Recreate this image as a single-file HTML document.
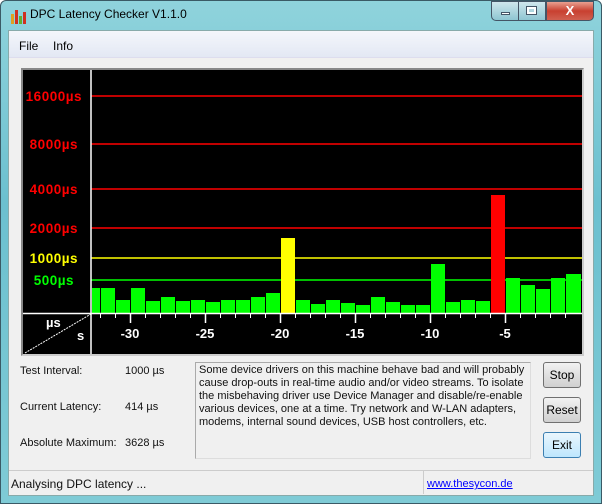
<!DOCTYPE html>
<html><head><meta charset="utf-8"><style>
*{margin:0;padding:0;box-sizing:border-box}
body{width:602px;height:504px;overflow:hidden;background:#fff;font-family:"Liberation Sans",sans-serif;position:relative}
.frame{position:absolute;left:0;top:0;width:602px;height:504px;background:linear-gradient(180deg,#8fd3dc 0%,#6cc0cf 40%,#7fcbd6 100%);border:1px solid #3a5a66;border-radius:6px 6px 0 0}
.title{position:absolute;left:30px;top:7px;font-size:12px;color:#000}
.client{position:absolute;left:8px;top:30px;width:586px;height:466px;background:#f0f0f0;border:1px solid #8aa}
.menu{position:absolute;left:0;top:0;width:584px;height:27px;background:linear-gradient(#f4f6fb,#e3e8f4);border-bottom:1px solid #dde}
.menu span{position:absolute;top:8px;font-size:12px}
.t{position:absolute;font-size:11px;color:#111;white-space:nowrap}
.btn{position:absolute;left:543px;width:38px;height:26px;border:1px solid #707070;border-radius:3px;background:linear-gradient(#f2f2f2,#e0e0e0 50%,#d0d0d0);font-size:12px;text-align:center;line-height:24px}
</style></head><body>
<div class="frame"></div>
<svg style="position:absolute;left:10px;top:8px" width="16" height="16"><rect x="1" y="6" width="3" height="10" fill="#e0a020"/><rect x="5" y="2" width="3" height="14" fill="#d03020"/><rect x="9" y="8" width="3" height="8" fill="#60b030"/><rect x="13" y="4" width="3" height="12" fill="#d03020"/></svg>
<div class="title">DPC Latency Checker V1.1.0</div>
<div style="position:absolute;left:491px;top:1px;width:28px;height:20px;border:1px solid #456;border-radius:0 0 0 5px;background:linear-gradient(#cfe6ec,#8ec6d2)"><div style="position:absolute;left:9px;top:10px;width:9px;height:3px;background:#fff;border:1px solid #456"></div></div>
<div style="position:absolute;left:519px;top:1px;width:27px;height:20px;border:1px solid #456;border-left:0;background:linear-gradient(#cfe6ec,#8ec6d2)"><div style="position:absolute;left:8px;top:5px;width:9px;height:7px;border:2px solid #fff;outline:1px solid #456"></div></div>
<div style="position:absolute;left:546px;top:1px;width:48px;height:20px;border:1px solid #456;border-radius:0 0 5px 0;background:linear-gradient(#e8a090,#c84030 50%,#d06050);color:#fff;font-weight:bold;font-size:13px;text-align:center;line-height:18px">X</div>
<div class="client">
<div class="menu"><span style="left:10px">File</span><span style="left:44px">Info</span></div>
</div>
<div style="position:absolute;left:21px;top:68px;width:563px;height:288px;border:2px solid #888;border-right-color:#ccc;border-bottom-color:#ccc"></div>
<svg style="position:absolute;left:23px;top:70px" width="559" height="284" viewBox="23 70 559 284" font-family="Liberation Sans, sans-serif" font-weight="bold">
<rect x="23" y="70" width="559" height="284" fill="#000"/>
<g stroke-width="1.4">
<line x1="91" x2="582" y1="96" y2="96" stroke="#f00"/>
<line x1="91" x2="582" y1="144" y2="144" stroke="#f00"/>
<line x1="91" x2="582" y1="189" y2="189" stroke="#f00"/>
<line x1="91" x2="582" y1="228" y2="228" stroke="#f00"/>
<line x1="91" x2="582" y1="258" y2="258" stroke="#ff0"/>
<line x1="91" x2="582" y1="280" y2="280" stroke="#0f0"/>
</g>
<g font-size="13.5" text-anchor="end" letter-spacing="0.5">
<text x="82" y="101" fill="#f00">16000µs</text>
<text x="78" y="149" fill="#f00">8000µs</text>
<text x="78" y="194" fill="#f00">4000µs</text>
<text x="78" y="233" fill="#f00">2000µs</text>
<text x="78" y="263" fill="#ff0">1000µs</text>
<text x="74" y="285" fill="#0f0">500µs</text>
</g>
<g fill="#0f0">
<rect x="92" y="288" width="8" height="25"/>
<rect x="101" y="288" width="14" height="25"/>
<rect x="116" y="300" width="14" height="13"/>
<rect x="131" y="288" width="14" height="25"/>
<rect x="146" y="301" width="14" height="12"/>
<rect x="161" y="297" width="14" height="16"/>
<rect x="176" y="301" width="14" height="12"/>
<rect x="191" y="300" width="14" height="13"/>
<rect x="206" y="302" width="14" height="11"/>
<rect x="221" y="300" width="14" height="13"/>
<rect x="236" y="300" width="14" height="13"/>
<rect x="251" y="297" width="14" height="16"/>
<rect x="266" y="293" width="14" height="20"/>
<rect x="281" y="238" width="14" height="75" fill="#ff0"/>
<rect x="296" y="300" width="14" height="13"/>
<rect x="311" y="304" width="14" height="9"/>
<rect x="326" y="300" width="14" height="13"/>
<rect x="341" y="303" width="14" height="10"/>
<rect x="356" y="305" width="14" height="8"/>
<rect x="371" y="297" width="14" height="16"/>
<rect x="386" y="302" width="14" height="11"/>
<rect x="401" y="305" width="14" height="8"/>
<rect x="416" y="305" width="14" height="8"/>
<rect x="431" y="264" width="14" height="49"/>
<rect x="446" y="302" width="14" height="11"/>
<rect x="461" y="300" width="14" height="13"/>
<rect x="476" y="301" width="14" height="12"/>
<rect x="491" y="195" width="14" height="118" fill="#f00"/>
<rect x="506" y="278" width="14" height="35"/>
<rect x="521" y="285" width="14" height="28"/>
<rect x="536" y="289" width="14" height="24"/>
<rect x="551" y="278" width="14" height="35"/>
<rect x="566" y="274" width="15" height="39"/>
</g>
<line x1="91" y1="70" x2="91" y2="354" stroke="#fff" stroke-width="1.5"/>
<line x1="23" y1="313.5" x2="582" y2="313.5" stroke="#fff" stroke-width="1.5"/>
<g stroke="#fff" stroke-width="1">
<path d="M100.5 313v5M115.5 313v5M145.5 313v5M160.5 313v5M175.5 313v5M190.5 313v5M220.5 313v5M235.5 313v5M250.5 313v5M265.5 313v5M295.5 313v5M310.5 313v5M325.5 313v5M340.5 313v5M370.5 313v5M385.5 313v5M400.5 313v5M415.5 313v5M445.5 313v5M460.5 313v5M475.5 313v5M490.5 313v5M520.5 313v5M535.5 313v5M550.5 313v5M565.5 313v5"/>
<path d="M130.5 313v10M205.5 313v10M280.5 313v10M355.5 313v10M430.5 313v10M505.5 313v10" stroke-width="1.5"/>
</g>
<g font-size="13" fill="#fff" text-anchor="middle">
<text x="130" y="338">-30</text><text x="205" y="338">-25</text><text x="280" y="338">-20</text><text x="355" y="338">-15</text><text x="430" y="338">-10</text><text x="505" y="338">-5</text>
</g>
<line x1="25" y1="353" x2="91" y2="314" stroke="#fff" stroke-dasharray="2 1"/>
<text x="46" y="327" font-size="13" fill="#fff">µs</text>
<text x="77" y="340" font-size="13" fill="#fff">s</text>
</svg>
<div class="t" style="left:20px;top:365px">Test Interval:</div>
<div class="t" style="left:125px;top:365px">1000 µs</div>
<div class="t" style="left:20px;top:401px">Current Latency:</div>
<div class="t" style="left:125px;top:401px">414 µs</div>
<div class="t" style="left:20px;top:437px">Absolute Maximum:</div>
<div class="t" style="left:125px;top:437px">3628 µs</div>
<div style="position:absolute;left:195px;top:362px;width:336px;height:97px;border:1px solid #aaa;border-right-color:#ddd;border-bottom-color:#ddd;background:#f0f0f0;font-size:11px;line-height:13px;padding:1px 3px;color:#111">Some device drivers on this machine behave bad and will probably cause drop-outs in real-time audio and/or video streams. To isolate the misbehaving driver use Device Manager and disable/re-enable various devices, one at a time. Try network and W-LAN adapters, modems, internal sound devices, USB host controllers, etc.</div>
<div class="btn" style="top:362px">Stop</div>
<div class="btn" style="top:397px">Reset</div>
<div class="btn" style="top:432px;border-color:#3c7fb1;background:linear-gradient(#eaf6fd,#bee6fd)">Exit</div>
<div style="position:absolute;left:9px;top:470px;width:584px;height:25px;border-top:1px solid #ccc;background:#f0f0f0"></div>
<div style="position:absolute;left:423px;top:471px;width:1px;height:23px;background:#ccc"></div>
<div class="t" style="left:11px;top:477px;font-size:12px">Analysing DPC latency ...</div>
<div class="t" style="left:427px;top:478px;color:#00f;text-decoration:underline">www.thesycon.de</div>
</body></html>
